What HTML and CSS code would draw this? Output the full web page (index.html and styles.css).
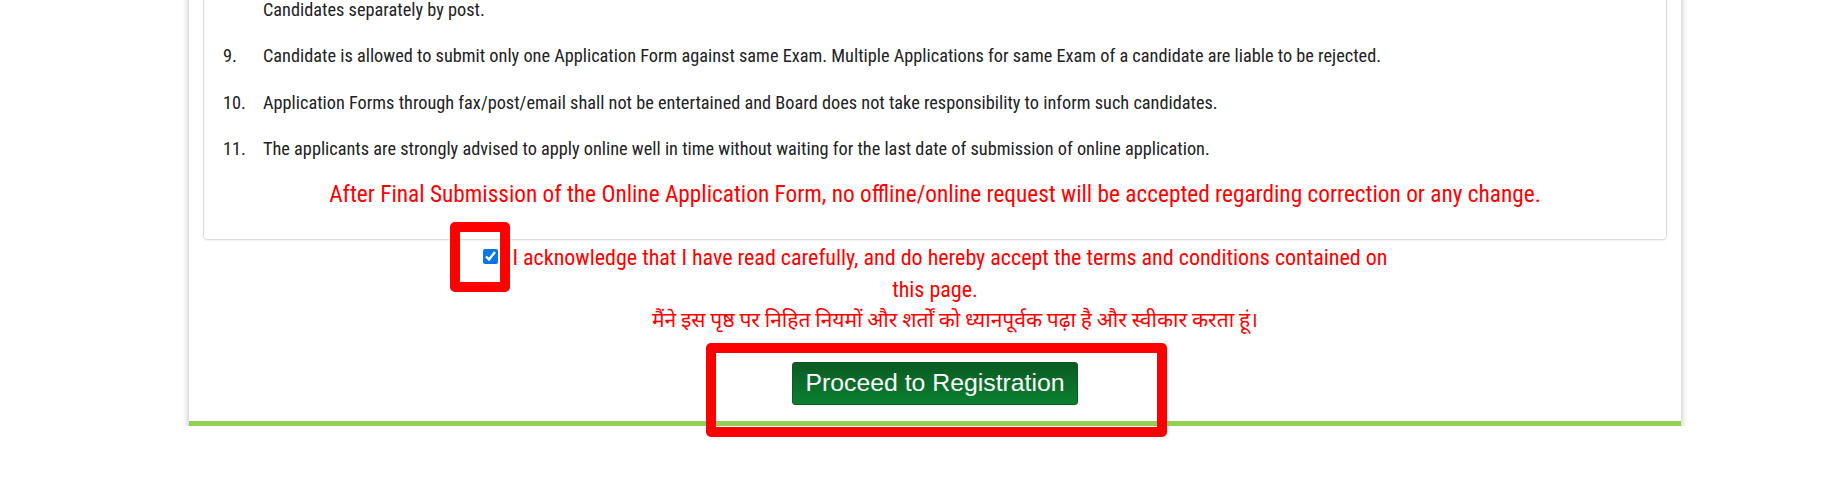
FILE: index.html
```html
<!DOCTYPE html>
<html lang="en">
<head>
<meta charset="utf-8">
<title>Instructions</title>
<link rel="stylesheet" href="styles.css">
</head>
<body>
<div class="panel">
  <div class="card">
    <div class="rows">
      <div class="row"><span class="num"></span><span class="txt">Candidates separately by post.</span></div>
      <div class="row"><span class="num">9.</span><span class="txt">Candidate is allowed to submit only one Application Form against same Exam. Multiple Applications for same Exam of a candidate are liable to be rejected.</span></div>
      <div class="row"><span class="num">10.</span><span class="txt">Application Forms through fax/post/email shall not be entertained and Board does not take responsibility to inform such candidates.</span></div>
      <div class="row"><span class="num">11.</span><span class="txt">The applicants are strongly advised to apply online well in time without waiting for the last date of submission of online application.</span></div>
    </div>
    <p class="warning">After Final Submission of the Online Application Form, no offline/online request will be accepted regarding correction or any change.</p>
  </div>
  <div class="ack">
    <label class="ack-label"><input type="checkbox" class="ack-box" checked>I acknowledge that I have read carefully, and do hereby accept the terms and conditions contained on this page.</label>
  </div>
  <p class="hindi">मैंने इस पृष्ठ पर निहित नियमों और शर्तों को ध्यानपूर्वक पढ़ा है और स्वीकार करता हूं।</p>
  <div class="actions">
    <button type="button" class="btn-proceed">Proceed to Registration</button>
  </div>
</div>
<div class="mark mark-check"></div>
<div class="mark mark-btn"></div>
</body>
</html>
```
FILE: styles.css
```css
html, body {
  margin: 0;
  padding: 0;
  background: #ffffff;
}
body {
  font-family: "Roboto Condensed", Roboto, "Noto Sans Devanagari", sans-serif;
  color: #222222;
}
.panel {
  width: 1492px;
  margin: -24.5px 0 0 189px;
  padding: 0 14px 16px;
  box-sizing: border-box;
  background: #ffffff;
  border-bottom: 5px solid #93cf54;
  box-shadow: 0 3px 7px rgba(0, 0, 0, 0.28);
}
.card {
  border: 1px solid #dcdcdc;
  border-radius: 4px;
  padding: 20px 19px 30px;
  box-shadow: 0 1px 2px rgba(0, 0, 0, 0.06);
}
.rows {
  display: flex;
  flex-direction: column;
  gap: 20.5px;
}
.row {
  display: grid;
  grid-template-columns: 40px 1fr;
  font-size: 18.3px;
  line-height: 26px;
}
.rows .row:last-child {
  margin-bottom: -3.5px;
}
.warning {
  margin: 20.5px 0 0;
  text-align: center;
  color: #ff0000;
  font-size: 23.3px;
  line-height: 30px;
}
.ack {
  width: 925px;
  margin: 1.5px auto 0;
  text-align: center;
  color: #ff0000;
  font-size: 22px;
  line-height: 32px;
}
.ack-box {
  width: 15px;
  height: 15px;
  margin: 7.5px 15px 0 0;
  vertical-align: top;
  accent-color: #0a75e6;
}
.hindi {
  margin: 0;
  padding-left: 40px;
  text-align: center;
  color: #ff0000;
  font-size: 21px;
  line-height: 28px;
}
.actions {
  display: flex;
  justify-content: center;
  margin-top: 28px;
}
.btn-proceed {
  width: 286px;
  height: 43px;
  padding: 0;
  border: 1px solid #0a5a21;
  border-radius: 3px;
  background: linear-gradient(#0b5a22, #0a8030);
  color: #ffffff;
  font-family: "Liberation Sans", Arial, sans-serif;
  font-size: 24.8px;
  cursor: pointer;
}
.mark {
  position: absolute;
  box-sizing: border-box;
  border: 10px solid #ff0000;
  border-radius: 5px;
}
.mark-check {
  left: 450px;
  top: 222px;
  width: 60px;
  height: 70px;
}
.mark-btn {
  left: 706px;
  top: 343px;
  width: 461px;
  height: 94px;
}
```
